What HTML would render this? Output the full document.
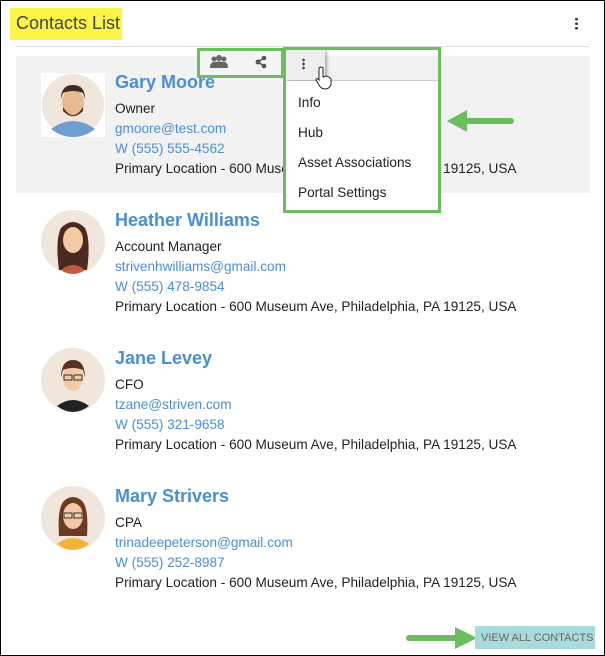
<!DOCTYPE html><html><head><style>
body{margin:0;width:605px;height:656px;position:relative;font-family:"Liberation Sans",sans-serif;background:#fff;overflow:hidden}
.frame{position:absolute;left:0;top:0;width:603px;height:654px;border:1px solid #000}
.a{position:absolute}
.name{font-size:18px;font-weight:bold;color:#4a8fd4;left:115px}
.t{font-size:13.6px;color:#222;left:115px}
.l{font-size:13.6px;color:#4a8fd4;left:115px}
</style></head><body>
<div class="frame"></div>
<div class="a" style="left:10px;top:8px;width:112px;height:32px;background:#fbf54a"></div>
<div class="a" style="left:16px;top:13px;font-size:18px;color:#444">Contacts List</div>
<div class="a" style="left:575px;top:17px;width:3px;height:13px;background:radial-gradient(circle,#333 1.3px,transparent 1.5px) 0 0/3px 4.5px"></div>
<div class="a" style="left:16px;top:46px;width:573px;height:1px;background:#ddd"></div>
<div class="a" style="left:16px;top:56px;width:574px;height:137px;background:#f2f2f2"></div>
<svg class="a" style="left:41px;top:73px" width="64" height="64"><rect width="64" height="64" fill="#fff"/><circle cx="32" cy="32" r="31" fill="#f1e6dc"/><path d="M10 56 Q32 40 54 56 Q44 64 32 64 Q20 64 10 56Z" fill="#6f9fd0"/><ellipse cx="32" cy="30" rx="11" ry="14" fill="#e9b98f"/><path d="M20 26 Q20 12 32 12 Q44 12 44 26 L42 20 Q32 16 22 20Z" fill="#3a2a22"/><path d="M22 34 Q32 50 42 34 L42 38 Q32 48 22 38Z" fill="#4a362a"/></svg>
<svg class="a" style="left:41px;top:210px" width="64" height="64"><circle cx="32" cy="32" r="32" fill="#f1e6dc"/><path d="M18 60 Q14 30 20 18 Q32 6 44 18 Q50 30 46 60Z" fill="#4a2a20"/><ellipse cx="32" cy="30" rx="10" ry="13" fill="#f3c9a6"/><path d="M20 60 Q32 50 44 60 Q38 64 32 64 Q26 64 20 60Z" fill="#c45a3c"/></svg>
<svg class="a" style="left:41px;top:348px" width="64" height="64"><circle cx="32" cy="32" r="32" fill="#f1e6dc"/><path d="M16 58 Q32 46 48 58 Q40 64 32 64 Q24 64 16 58Z" fill="#222"/><ellipse cx="32" cy="30" rx="10" ry="13" fill="#f3c9a6"/><path d="M20 30 Q20 12 32 12 Q44 12 44 30 L42 22 Q32 18 22 22Z" fill="#5a3320"/><rect x="23" y="27" width="8" height="5" fill="none" stroke="#333"/><rect x="33" y="27" width="8" height="5" fill="none" stroke="#333"/></svg>
<svg class="a" style="left:41px;top:486px" width="64" height="64"><circle cx="32" cy="32" r="32" fill="#f1e6dc"/><path d="M16 58 Q32 46 48 58 Q40 64 32 64 Q24 64 16 58Z" fill="#f2b432"/><path d="M18 50 Q16 20 24 14 Q32 8 40 14 Q48 20 46 50Z" fill="#6a3a22"/><ellipse cx="32" cy="30" rx="10" ry="13" fill="#f3c9a6"/><rect x="23" y="27" width="8" height="5" fill="none" stroke="#333"/><rect x="33" y="27" width="8" height="5" fill="none" stroke="#333"/></svg>

<div class="a name" style="top:72px">Gary Moore</div>
<div class="a t" style="top:101px">Owner</div>
<div class="a l" style="top:121px">gmoore@test.com</div>
<div class="a l" style="top:141px">W (555) 555-4562</div>
<div class="a t" style="top:161px">Primary Location - 600 Museum Ave, Philadelphia, PA 19125, USA</div>

<div class="a name" style="top:210px">Heather Williams</div>
<div class="a t" style="top:239px">Account Manager</div>
<div class="a l" style="top:259px">strivenhwilliams@gmail.com</div>
<div class="a l" style="top:279px">W (555) 478-9854</div>
<div class="a t" style="top:299px">Primary Location - 600 Museum Ave, Philadelphia, PA 19125, USA</div>

<div class="a name" style="top:348px">Jane Levey</div>
<div class="a t" style="top:377px">CFO</div>
<div class="a l" style="top:397px">tzane@striven.com</div>
<div class="a l" style="top:417px">W (555) 321-9658</div>
<div class="a t" style="top:437px">Primary Location - 600 Museum Ave, Philadelphia, PA 19125, USA</div>

<div class="a name" style="top:486px">Mary Strivers</div>
<div class="a t" style="top:515px">CPA</div>
<div class="a l" style="top:535px">trinadeepeterson@gmail.com</div>
<div class="a l" style="top:555px">W (555) 252-8987</div>
<div class="a t" style="top:575px">Primary Location - 600 Museum Ave, Philadelphia, PA 19125, USA</div>

<div class="a" style="left:197px;top:48px;width:87px;height:30px;background:#f4f4f4;border:3px solid #6cbd5e;box-sizing:border-box"></div>
<svg class="a" style="left:210px;top:55px" width="18" height="14"><circle cx="4" cy="4" r="2.5" fill="#666"/><circle cx="9" cy="3" r="3" fill="#666"/><circle cx="14" cy="4" r="2.5" fill="#666"/><path d="M0 13 Q0 7 4 7 Q9 6 14 7 Q18 7 18 13Z" fill="#666"/></svg>
<svg class="a" style="left:254px;top:55px" width="14" height="14"><line x1="4" y1="7" x2="10" y2="3" stroke="#555" stroke-width="1.5"/><line x1="4" y1="7" x2="10" y2="11" stroke="#555" stroke-width="1.5"/><circle cx="4" cy="7" r="2.5" fill="#555"/><circle cx="10" cy="3" r="2.3" fill="#555"/><circle cx="10" cy="11" r="2.3" fill="#555"/></svg>
<div class="a" style="left:285px;top:49px;width:40px;height:31px;background:#eee;box-shadow:2px 2px 3px rgba(0,0,0,.3)"></div>
<div class="a" style="left:302px;top:58px;width:3px;height:12px;background:radial-gradient(circle,#555 1.3px,transparent 1.5px) 0 0/3px 4px"></div>
<div class="a" style="left:325px;top:80px;width:115px;height:1px;background:#ccc"></div>
<div class="a" style="left:283px;top:47px;width:158px;height:166px;border:3px solid #6cbd5e;box-sizing:border-box;background:transparent"></div>
<div class="a" style="left:286px;top:81px;width:152px;height:129px;background:#fff"></div>
<div class="a" style="left:298px;top:95px;font-size:13.6px;color:#222">Info</div>
<div class="a" style="left:298px;top:125px;font-size:13.6px;color:#222">Hub</div>
<div class="a" style="left:298px;top:155px;font-size:13.6px;color:#222">Asset Associations</div>
<div class="a" style="left:298px;top:185px;font-size:13.6px;color:#222">Portal Settings</div>
<svg class="a" style="left:314px;top:66px" width="20" height="24"><path d="M5 2 Q7 0 9 2 L9 11 L12 10 L15 11 L17 13 L17 19 Q15 23 11 23 Q7 23 5 19 L2 14 Q2 12 4 13 L5 14Z" fill="#fff" stroke="#222" stroke-width="1"/></svg>
<svg class="a" style="left:445px;top:109px" width="70" height="24"><line x1="18" y1="12" x2="66" y2="12" stroke="#6cbd5e" stroke-width="6" stroke-linecap="round"/><path d="M2 12 L22 1 L22 23Z" fill="#6cbd5e"/></svg>
<svg class="a" style="left:405px;top:626px" width="72" height="24"><line x1="4" y1="12" x2="54" y2="12" stroke="#6cbd5e" stroke-width="6" stroke-linecap="round"/><path d="M72 12 L50 1 L50 23Z" fill="#6cbd5e"/></svg>
<div class="a" style="left:475px;top:626px;width:120px;height:23px;background:#a8dcdc"></div>
<div class="a" style="left:481px;top:632px;font-size:11px;color:#666">VIEW ALL CONTACTS</div>
</body></html>
